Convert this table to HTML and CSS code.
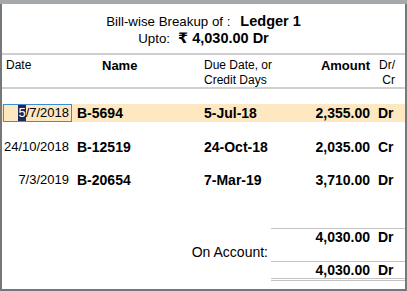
FILE: index.html
```html
<!DOCTYPE html>
<html>
<head>
<meta charset="utf-8">
<link rel="stylesheet" href="styles.css">
</head>
<body>
<div class="panel">
  <div class="title">
    <div class="title-line">Bill-wise Breakup of :<b class="title-strong">Ledger 1</b></div>
    <div class="title-line">Upto:<b class="title-strong title-amt">₹ 4,030.00 Dr</b></div>
  </div>
  <div class="grid head">
    <div class="h-date">Date</div>
    <div class="h-name">Name</div>
    <div class="h-due">Due Date, or<br>Credit Days</div>
    <div class="h-amt">Amount</div>
    <div class="h-dc">Dr/<br>Cr</div>
  </div>
  <div class="rows">
    <div class="grid row selected">
      <div class="c-date"><span class="date-box"><span class="cursor">5</span>/7/2018</span></div>
      <div class="c-name">B-5694</div>
      <div class="c-due">5-Jul-18</div>
      <div class="c-amt">2,355.00</div>
      <div class="c-dc">Dr</div>
    </div>
    <div class="grid row">
      <div class="c-date">24/10/2018</div>
      <div class="c-name">B-12519</div>
      <div class="c-due">24-Oct-18</div>
      <div class="c-amt">2,035.00</div>
      <div class="c-dc">Cr</div>
    </div>
    <div class="grid row">
      <div class="c-date">7/3/2019</div>
      <div class="c-name">B-20654</div>
      <div class="c-due">7-Mar-19</div>
      <div class="c-amt">3,710.00</div>
      <div class="c-dc">Dr</div>
    </div>
  </div>
  <div class="totals">
    <div class="onacc">On Account:</div>
    <div class="tot-col">
      <div class="tot-row"><div class="c-amt">4,030.00</div><div class="c-dc">Dr</div></div>
      <div class="tot-spacer"></div>
      <div class="tot-row tot-final"><div class="c-amt">4,030.00</div><div class="c-dc">Dr</div></div>
    </div>
  </div>
</div>
</body>
</html>
```
FILE: styles.css
```css
html, body {
  margin: 0;
  padding: 0;
}
body {
  width: 407px;
  height: 291px;
  box-sizing: border-box;
  padding-top: 4px;
  background: #a6a9ac;
  font-family: "Liberation Sans", Arial, "DejaVu Sans", sans-serif;
  color: #000;
  overflow: hidden;
}
.panel {
  box-sizing: border-box;
  height: 287px;
  background: #fff;
  border-left: 2px solid #75787b;
  border-right: 2px solid #75787b;
  border-bottom: 2px solid #75787b;
  display: flex;
  flex-direction: column;
}
.title {
  height: 51px;
  box-sizing: border-box;
  padding-top: 9px;
  text-align: center;
  font-size: 13.3px;
  line-height: 16px;
  border-bottom: 2px solid #cfcfcf;
}
.title-strong {
  font-size: 14.5px;
  margin-left: 10px;
}
.title-amt {
  margin-left: 8px;
}
.grid {
  display: grid;
  grid-template-columns: 70px 132px 96px 70px 35px;
}
.head {
  height: 34px;
  box-sizing: border-box;
  padding-top: 3px;
  font-size: 12px;
  line-height: 15px;
  border-bottom: 2px solid #cfcfcf;
}
.h-date { padding-left: 4px; }
.h-name { padding-left: 30px; font-weight: bold; font-size: 13px; }
.h-due { padding-left: 0; }
.h-amt { text-align: right; font-weight: bold; font-size: 13px; }
.h-dc { text-align: right; padding-right: 10px; }

.rows {
  flex: 1;
  display: flex;
  flex-direction: column;
  gap: 15.5px;
  padding-top: 15px;
}
.row {
  height: 18px;
  line-height: 18px;
  font-size: 14px;
}
.row.selected {
  background: #fde8c1;
}
.c-date {
  font-size: 13px;
  text-align: right;
  padding-right: 3px;
}
.selected .c-date {
  padding: 0;
  padding-left: 1px;
}
.date-box {
  display: block;
  height: 18px;
  box-sizing: border-box;
  border: 1px solid #3b8ed0;
  line-height: 16px;
  padding-right: 2px;
  text-align: right;
}
.cursor {
  background: #1d2a5b;
  color: #fff;
  display: inline-block;
  line-height: 16px;
}
.c-name { padding-left: 5px; font-weight: bold; }
.c-due { font-weight: bold; }
.c-amt { text-align: right; font-weight: bold; }
.c-dc { padding-left: 8px; font-weight: bold; }

.totals {
  display: grid;
  grid-template-columns: 1fr 134px;
  padding-bottom: 8px;
}
.onacc {
  font-size: 14px;
  line-height: 16px;
  text-align: right;
  padding-right: 3px;
  margin-top: 16px;
}
.tot-col {
  border-top: 1px solid #c3c3c3;
  font-size: 14px;
}
.tot-row {
  display: grid;
  grid-template-columns: 1fr 35px;
  height: 16px;
  line-height: 16px;
}
.tot-spacer {
  height: 16px;
  border-bottom: 1px solid #c3c3c3;
}
.tot-final {
  height: 16px;
  border-bottom: 3px double #c3c3c3;
}
```
